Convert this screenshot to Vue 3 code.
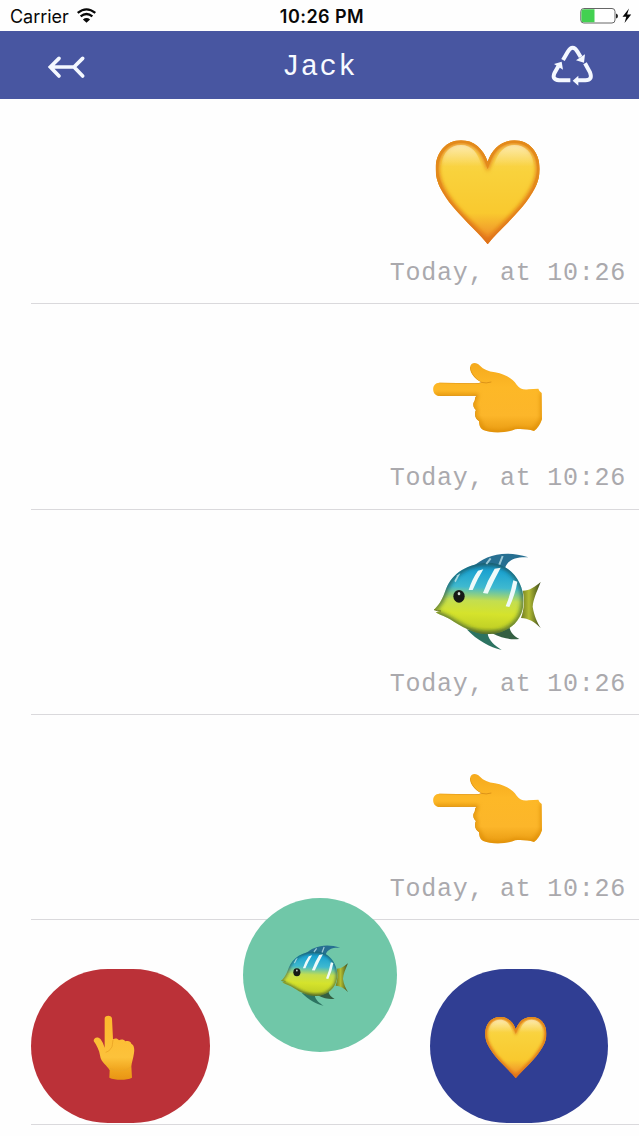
<script setup>
const messages = [
  { id: 1, emoji: 'heart', time: 'Today, at 10:26' },
  { id: 2, emoji: 'hand', time: 'Today, at 10:26' },
  { id: 3, emoji: 'fish', time: 'Today, at 10:26' },
  { id: 4, emoji: 'hand', time: 'Today, at 10:26' },
]
</script>

<template>
  <div class="screen">
    <svg class="defs" aria-hidden="true">
      <defs>
        <linearGradient id="gHeart" x1="0" y1="0" x2="0" y2="1">
          <stop offset="0" stop-color="#fbd760" />
          <stop offset=".3" stop-color="#f9d23c" />
          <stop offset=".7" stop-color="#f9c92f" />
          <stop offset=".87" stop-color="#f2a02b" />
          <stop offset="1" stop-color="#e86b20" />
        </linearGradient>
        <linearGradient id="gShine" x1="0" y1="0" x2="0" y2="1">
          <stop offset="0" stop-color="#fff" stop-opacity=".5" />
          <stop offset="1" stop-color="#fff" stop-opacity="0" />
        </linearGradient>
        <linearGradient id="gHand" x1="0" y1="0" x2="0" y2="1">
          <stop offset="0" stop-color="#f5a91c" />
          <stop offset=".35" stop-color="#fdb827" />
          <stop offset=".75" stop-color="#fcb62a" />
          <stop offset="1" stop-color="#e8990f" />
        </linearGradient>
        <linearGradient id="gUp" x1="0" y1="0" x2="0" y2="1">
          <stop offset="0" stop-color="#fdb92c" />
          <stop offset=".65" stop-color="#fcc23b" />
          <stop offset=".85" stop-color="#f0a41d" />
          <stop offset="1" stop-color="#e89515" />
        </linearGradient>
        <linearGradient id="gFish" x1=".45" y1="0" x2=".4" y2="1">
          <stop offset="0" stop-color="#1e7fa8" />
          <stop offset=".12" stop-color="#1ca3d1" />
          <stop offset=".34" stop-color="#3fb9cf" />
          <stop offset=".52" stop-color="#c3de50" />
          <stop offset=".7" stop-color="#d5e32c" />
          <stop offset=".88" stop-color="#c3d226" />
          <stop offset="1" stop-color="#7e8d1c" />
        </linearGradient>
        <linearGradient id="gTail" x1="0" y1="0" x2="1" y2="0">
          <stop offset="0" stop-color="#6f7b20" />
          <stop offset=".4" stop-color="#b3bd32" />
          <stop offset="1" stop-color="#3c4a1d" />
        </linearGradient>
        <filter id="soft" x="-10%" y="-10%" width="120%" height="120%">
          <feGaussianBlur stdDeviation="7" />
        </filter>
        <clipPath id="heartClip">
          <path d="M323 373C303 346 258 307 220 262C187 222 167 187 167 147C167 96 200 61 243 61C283 61 310 88 323 125C336 88 363 61 403 61C447 61 479 96 479 147C479 187 459 222 426 262C388 307 343 346 323 373Z" />
        </clipPath>
        <clipPath id="handClip">
          <path d="M58 98L165 100Q178 100 184 97C163 86 150 69 150 52C152 37 169 35 180 47C190 58 205 64 225 67C260 74 277 86 290 104C300 117 310 120 325 118L355 116Q358 125 365 129L366 208Q358 232 342 243C325 238 305 236 285 238C262 249 215 251 190 240C180 235 177 225 177 213C165 207 162 190 168 180C158 172 158 160 165 150Q163 143 170 137L60 138C33 138 33 98 58 98Z" />
        </clipPath>
        <clipPath id="fishClip">
          <path d="M42 207C62 188 68 172 78 145C96 98 145 66 208 66C272 68 311 125 311 180C311 240 265 281 200 281C160 280 120 255 90 236C72 226 55 221 47 215L60 211Z" />
        </clipPath>
        <symbol id="heart" viewBox="156 51 336 336">
          <g clip-path="url(#heartClip)">
            <path fill="url(#gHeart)" d="M167 61H479V373H167Z" />
            <path fill="none" stroke="#df7317" stroke-width="20" filter="url(#soft)" d="M323 373C303 346 258 307 220 262C187 222 167 187 167 147C167 96 200 61 243 61C283 61 310 88 323 125C336 88 363 61 403 61C447 61 479 96 479 147C479 187 459 222 426 262C388 307 343 346 323 373Z" />
            <path fill="none" stroke="#e38a1b" stroke-width="15" d="M180 200C171 180 167 163 167 147C167 96 200 61 243 61C283 61 310 88 323 125C336 88 363 61 403 61C447 61 479 96 479 147C479 163 475 180 466 200" />
            <path fill="url(#gShine)" d="M186 139C184 98 212 75 243 75C275 75 294 98 305 139ZM341 139C352 98 373 75 403 75C434 75 462 98 460 139Z" />
          </g>
        </symbol>
        <symbol id="hand" viewBox="36 -24 336 336">
          <g clip-path="url(#handClip)">
            <path fill="url(#gHand)" d="M36 36H368V250H36Z" />
            <path fill="none" stroke="#d9880f" stroke-width="8" filter="url(#soft)" d="M42 136L170 137L160 165L168 180L165 198L177 213L190 241C215 251 262 249 285 238L342 243L366 208V129" />
            <path fill="none" stroke="#dc9318" stroke-width="3" d="M58 98L165 100Q178 100 184 97M150 52C152 69 165 87 184 97Q198 101 214 96M60 138L170 137Q163 143 165 150C158 160 158 172 168 180C162 190 165 207 177 213" />
          </g>
        </symbol>
        <symbol id="fish" viewBox="36 22 336 336">
          <path fill="#276f91" d="M160 78C190 48 250 25 325 50C290 48 265 55 255 82C240 70 200 68 160 78Z" />
          <path fill="url(#gTail)" d="M308 150C330 150 345 138 362 124C350 155 340 175 338 198C342 225 352 245 362 262C345 245 325 232 303 232C313 205 314 175 308 150Z" />
          <path fill="#2c7361" d="M140 266C172 300 210 320 245 328C225 315 205 300 203 278Z" />
          <path fill="#345f42" d="M216 278C250 295 275 298 298 295C280 285 270 275 268 256Z" />
          <g clip-path="url(#fishClip)">
            <path fill="url(#gFish)" d="M40 64H314V284H40Z" />
            <path fill="none" stroke="#173f38" stroke-opacity=".75" stroke-width="12" filter="url(#soft)" d="M42 207C62 188 68 172 78 145C96 98 145 66 208 66C272 68 311 125 311 180C311 240 265 281 200 281C160 280 120 255 90 236L47 215" />
          </g>
          <path fill="#eefafa" d="M174 90L190 86Q172 115 158 148L146 148Q156 115 174 90ZM224 84L242 81Q222 118 203 159L189 157Q203 118 224 84ZM280 119L292 123Q286 160 268 199L257 197Q272 160 280 119Z" />
          <path fill="#a9dbe2" d="M112 104L121 98L107 125L103 121Z" />
          <path fill="none" stroke="#9cc8d5" stroke-width="6" d="M199 70L212 53M238 72L248 46" />
          <path fill="none" stroke="#69751e" stroke-width="3" d="M42 207Q53 211 63 211" />
          <ellipse cx="117" cy="167" rx="17" ry="19" fill="#161a16" />
          <ellipse cx="117" cy="159" rx="4" ry="5" fill="#d4ddd6" />
        </symbol>
        <symbol id="up" viewBox="192 374 198 198">
          <path fill="url(#gUp)" d="M254 385C254 373 275 373 276 385L279 447C285 443 292 443 297 450C303 446 312 447 316 453C325 450 332 453 334 460C342 463 344 475 342 488C340 505 335 515 334 528L336 562C320 570 285 570 268 562L269 540C262 525 243 518 240 495C238 480 230 465 221 452C221 440 235 438 242 447Q250 458 254 472Z" />
          <path fill="none" stroke="#eaa425" stroke-width="2.500" d="M279 449L276 470Q266 486 257 486M270 534Q302 552 333 530" />
        </symbol>
      </defs>
    </svg>

    <div class="status">
      <div class="carrier">
        <span>Carrier</span>
        <svg class="wifi" viewBox="232 22 58 46">
          <path fill="none" stroke="#080808" stroke-width="7" d="M234 37Q261 15 288 37M243 48Q261 33 279 48" />
          <path fill="#080808" d="M250 57Q261 48 272 57L261 67Z" />
        </svg>
      </div>
      <div class="clock">10:26 PM</div>
      <div class="power">
        <svg class="battery" viewBox="0 0 52 18">
          <rect x=".8" y="1.5" width="34.2" height="14.5" rx="3" fill="#fff" stroke="#666" />
          <path fill="#43d151" d="M3.5 2.2H14.5V15.3H3.5Q1.4 15.3 1.4 13V4.5Q1.4 2.2 3.5 2.2Z" />
          <path fill="#222" d="M36 6.5Q38 7 38 9T36 11.5Z" />
          <path fill="#080808" d="M49 1.500L42.500 9.800H46.300L44.500 16L51.200 7.500H47.100Z" />
        </svg>
      </div>
    </div>

    <header class="nav">
      <svg class="back" viewBox="141 163 117 72">
        <path fill="none" stroke="#f4f8ff" stroke-width="11" stroke-linecap="round" d="M177 173L151 199L177 226M152 199H222M248 173L222 199L248 226" />
      </svg>
      <h1>Jack</h1>
      <svg class="recycle" viewBox="93 133 129 126">
        <g fill="none" stroke="#f4f8ff" stroke-width="12">
          <path d="M129 181L143 157Q158 131 173 157L182 172" />
          <path d="M195 191L210 218Q219 242 196 242H173" />
          <path d="M151 242H117Q94 240 104 219L115 200" />
        </g>
        <path fill="#f4f8ff" d="M168 182L195 164L192 189ZM158 243L175 228V258ZM125 186L102 193L129 210Z" />
      </svg>
    </header>

    <main class="messages">
      <article v-for="message in messages" :key="message.id" class="row">
        <svg class="emoji"><use :href="'#' + message.emoji" /></svg>
        <time>{{ message.time }}</time>
      </article>
      <article class="row"></article>
    </main>

    <div class="actions">
      <button class="action red" aria-label="Point up"><svg><use href="#up" /></svg></button>
      <button class="action green" aria-label="Fish"><svg><use href="#fish" /></svg></button>
      <button class="action blue" aria-label="Heart"><svg><use href="#heart" /></svg></button>
    </div>
  </div>
</template>

<style>
body {
  background: #fefefe;
  overflow: hidden;
}
</style>

<style scoped>
.screen {
  position: relative;
  width: 639px;
  height: 1136px;
  overflow: hidden;
  background: #fefefe;
}
.defs {
  position: absolute;
  width: 0;
  height: 0;
}
.status {
  display: grid;
  grid-template-columns: 1fr auto 1fr;
  align-items: center;
  height: 31px;
  padding: 1px 7px 0 10px;
  box-sizing: border-box;
  font-family: Inter, "Liberation Sans", sans-serif;
  font-size: 18px;
  color: #080808;
}
.carrier {
  display: flex;
  align-items: center;
  gap: 8px;
  letter-spacing: -0.05px;
}
.wifi {
  width: 19px;
  height: 15px;
  margin-top: -1px;
}
.clock {
  font-weight: 600;
  letter-spacing: 0.45px;
  padding-left: 2px;
}
.power {
  display: flex;
  justify-content: flex-end;
}
.battery {
  width: 52px;
  height: 18px;
}
.nav {
  display: grid;
  grid-template-columns: 39px 1fr 43px;
  align-items: center;
  height: 68px;
  padding: 0 45px 0 47px;
  box-sizing: border-box;
  background: #4856a1;
}
.back {
  width: 39px;
  height: 24px;
  margin-top: 3px;
}
h1 {
  margin: 6px 0 0 2px;
  text-align: center;
  font: 400 29px/34px "Liberation Mono", monospace;
  letter-spacing: 1.4px;
  color: #f7faff;
}
.recycle {
  width: 43px;
  height: 42px;
}
.row {
  height: 205.3px;
  margin-left: 31px;
  padding: 38px 13px 0 0;
  box-sizing: border-box;
  border-bottom: 1px solid #dad9dc;
  display: flex;
  flex-direction: column;
  align-items: flex-end;
}
.emoji {
  width: 112px;
  height: 112px;
  flex: none;
  margin-right: 82px;
}
time {
  margin-top: 10px;
  font: 400 25px/30px "Liberation Mono", monospace;
  letter-spacing: 0.75px;
  color: #aaa9ad;
  white-space: nowrap;
}
.actions {
  position: absolute;
  left: 31px;
  right: 31px;
  top: 898px;
  height: 225px;
  display: flex;
  justify-content: space-between;
  align-items: flex-end;
}
.action {
  width: 178px;
  height: 154px;
  border: 0;
  border-radius: 77px;
  padding: 3px 7px 0 0;
  display: flex;
  align-items: center;
  justify-content: center;
}
.action svg {
  width: 66px;
  height: 66px;
}
.red {
  width: 179px;
  background: #bb3138;
}
.green {
  width: 154px;
  align-self: flex-start;
  padding: 3px 10px 0 0;
  background: #70c7a8;
}
.green svg {
  width: 70px;
  height: 70px;
}
.blue {
  background: #303e93;
}
</style>
